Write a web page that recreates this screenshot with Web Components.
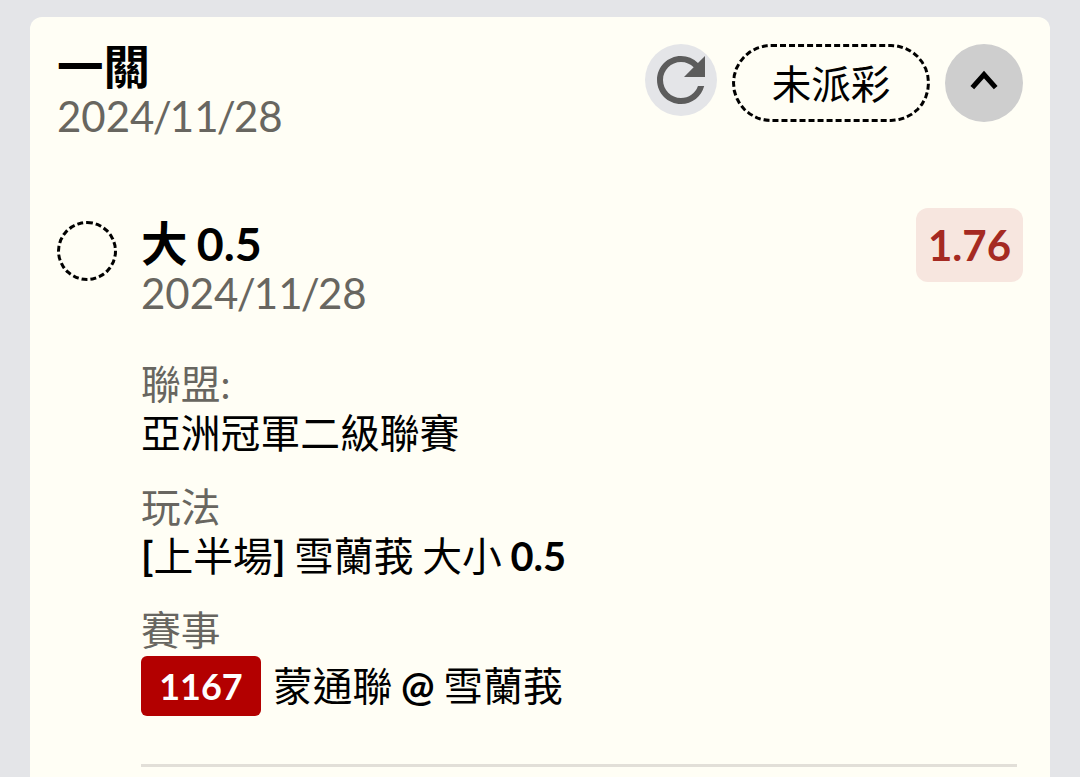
<!DOCTYPE html>
<html lang="zh-Hant">
<head>
<meta charset="utf-8">
<title>注單</title>
<style>
  * {
    box-sizing: border-box;
  }
  body {
    margin: 0;
    height: 777px;
    padding: 17px 30px 0;
    background-color: #e4e5e8;
    color: #000;
    font-family: Lato, "Noto Sans CJK TC", sans-serif;
  }
  b {
    font-weight: 700;
  }
</style>
</head>
<body>
<bet-card>
  <title-block slot="title" heading="一關" date="2024/11/28"></title-block>
  <refresh-button slot="actions"></refresh-button>
  <status-pill slot="actions">未派彩</status-pill>
  <toggle-button slot="actions"></toggle-button>
  <bet-leg>
    <title-block slot="title" heading="大 0.5" date="2024/11/28"></title-block>
    <odds-badge slot="odds">1.76</odds-badge>
    <info-row label="聯盟:">亞洲冠軍二級聯賽</info-row>
    <info-row label="玩法"><span><b>[</b>上半場<b>]</b> 雪蘭莪 大小 <b>0.5</b></span></info-row>
    <info-row label="賽事"><match-tag>1167</match-tag><span>蒙通聯 <b>@</b> 雪蘭莪</span></info-row>
  </bet-leg>
</bet-card>

<script>
class BetCard extends HTMLElement {
  constructor() {
    super();
    this.attachShadow({ mode: "open" }).innerHTML = `
      <style>
        :host {
          display: block;
          box-sizing: border-box;
          height: 760px;
          padding: 27px 27px 0 28px;
          border-radius: 12px 12px 0 0;
          background-color: #fffef5;
        }
        header {
          display: flex;
          justify-content: space-between;
          height: 164px;
        }
        .actions {
          display: flex;
          align-items: flex-start;
          gap: 15px;
        }
      </style>
      <header>
        <slot name="title"></slot>
        <div class="actions"><slot name="actions"></slot></div>
      </header>
      <slot></slot>`;
  }
}

class TitleBlock extends HTMLElement {
  connectedCallback() {
    const date = this.getAttribute("date").replaceAll("/", "<span>/</span>");
    this.attachShadow({ mode: "open" }).innerHTML = `
      <style>
        :host {
          display: block;
        }
        h2, p {
          margin: 0;
          white-space: nowrap;
        }
        h2 {
          margin: -2px 0 1px -1px;
          font-size: 46.5px;
          line-height: 48px;
          font-weight: 700;
          word-spacing: -2px;
        }
        p {
          margin-left: -1px;
          font-size: 42px;
          line-height: 50px;
          color: #686660;
        }
        p span {
          margin: 0 -1.8px;
        }
      </style>
      <h2>${this.getAttribute("heading")}</h2>
      <p>${date}</p>`;
  }
}

class RefreshButton extends HTMLElement {
  constructor() {
    super();
    this.attachShadow({ mode: "open" }).innerHTML = `
      <style>
        :host {
          display: block;
          width: 72px;
          height: 72px;
          border-radius: 50%;
          background-color: #e4e5e8;
        }
        svg {
          display: block;
          fill: #5c5c5c;
        }
      </style>
      <svg width="72" height="72" viewBox="0 0 24 24">
        <path d="M17.65 6.35A7.958 7.958 0 0 0 12 4c-4.42 0-7.99 3.58-7.99 8s3.57 8 7.99 8c3.73 0 6.84-2.55 7.73-6h-2.08A5.99 5.99 0 0 1 12 18c-3.31 0-6-2.69-6-6s2.69-6 6-6c1.66 0 3.14.69 4.22 1.78L13 11h7V4l-2.35 2.35z"/>
      </svg>`;
  }
}

class StatusPill extends HTMLElement {
  constructor() {
    super();
    this.attachShadow({ mode: "open" }).innerHTML = `
      <style>
        :host {
          display: flex;
          box-sizing: border-box;
          justify-content: center;
          width: 198px;
          height: 78px;
          border: 3px dashed #000;
          border-radius: 39px;
          font-size: 39.6px;
          line-height: 74px;
        }
      </style>
      <slot></slot>`;
  }
}

class ToggleButton extends HTMLElement {
  constructor() {
    super();
    this.attachShadow({ mode: "open" }).innerHTML = `
      <style>
        :host {
          display: block;
          width: 78px;
          height: 78px;
          border-radius: 50%;
          background-color: #cecece;
        }
        svg {
          display: block;
        }
      </style>
      <svg width="78" height="78" viewBox="0 0 78 78">
        <path d="M27.3 43.6 39 30.5 50.7 43.6" fill="none" stroke="#000" stroke-width="5"/>
      </svg>`;
  }
}

// one selection of the bet: marker, title, odds and its detail rows
class BetLeg extends HTMLElement {
  constructor() {
    super();
    this.attachShadow({ mode: "open" }).innerHTML = `
      <style>
        :host {
          display: grid;
          grid-template-columns: 84px 1fr auto;
          margin-left: -1px;
        }
        .marker {
          box-sizing: border-box;
          width: 60px;
          height: 60px;
          margin-top: 13px;
          border: 3px dashed #000;
          border-radius: 50%;
        }
        .title {
          padding: 13px 0 0 1px;
          height: 151px;
          box-sizing: border-box;
        }
        .details {
          grid-column: 2 / 4;
          display: flex;
          flex-direction: column;
          gap: 25px;
          margin-right: 6px;
          padding-bottom: 48px;
          border-bottom: 3px solid #e2dfd8;
        }
      </style>
      <div class="marker"></div>
      <div class="title"><slot name="title"></slot></div>
      <slot name="odds"></slot>
      <div class="details"><slot></slot></div>`;
  }
}

class OddsBadge extends HTMLElement {
  constructor() {
    super();
    this.attachShadow({ mode: "open" }).innerHTML = `
      <style>
        :host {
          display: block;
          box-sizing: border-box;
          width: 107px;
          height: 74px;
          border-radius: 12px;
          background-color: #f7e6df;
          color: #a52a22;
          font-size: 42px;
          font-weight: 700;
          line-height: 75px;
          text-align: center;
        }
      </style>
      <slot></slot>`;
  }
}

class InfoRow extends HTMLElement {
  connectedCallback() {
    this.attachShadow({ mode: "open" }).innerHTML = `
      <style>
        :host {
          display: block;
          font-size: 39.8px;
          line-height: 49px;
          white-space: nowrap;
        }
        .label {
          color: #686660;
        }
        .value {
          display: flex;
          align-items: center;
          word-spacing: -1.5px;
        }
        ::slotted(match-tag) {
          margin-top: 2px;
        }
        ::slotted(match-tag + span) {
          padding-top: 3px;
        }
      </style>
      <div class="label">${this.getAttribute("label")}</div>
      <div class="value"><slot></slot></div>`;
  }
}

class MatchTag extends HTMLElement {
  constructor() {
    super();
    this.attachShadow({ mode: "open" }).innerHTML = `
      <style>
        :host {
          display: block;
          width: 120px;
          height: 60px;
          margin-right: 12px;
          border-radius: 6px;
          background-color: #b30000;
          color: #fff;
          font-size: 36px;
          font-weight: 700;
          line-height: 61px;
          text-align: center;
        }
      </style>
      <slot></slot>`;
  }
}

customElements.define("bet-card", BetCard);
customElements.define("title-block", TitleBlock);
customElements.define("refresh-button", RefreshButton);
customElements.define("status-pill", StatusPill);
customElements.define("toggle-button", ToggleButton);
customElements.define("bet-leg", BetLeg);
customElements.define("odds-badge", OddsBadge);
customElements.define("info-row", InfoRow);
customElements.define("match-tag", MatchTag);
</script>
</body>
</html>
